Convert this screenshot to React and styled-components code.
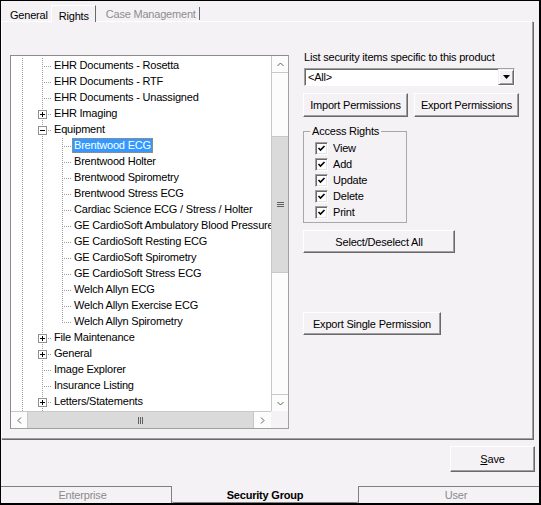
import React from 'react';
import styled, { createGlobalStyle, css } from 'styled-components';

const bg = '#f5f2f5';
const dots = '#a0a0a0';

const GlobalStyle = createGlobalStyle`
  html, body {
    margin: 0;
    padding: 0;
    background: ${bg};
  }
  * {
    box-sizing: border-box;
  }
`;

const Window = styled.div`
  width: 541px;
  height: 505px;
  display: flex;
  flex-direction: column;
  overflow: hidden;
  background: ${bg};
  border: 1px solid #000;
  border-right-width: 2px;
  border-bottom-width: 2px;
  font-family: 'Liberation Sans', Arial, sans-serif;
  font-size: 11px;
  letter-spacing: -0.2px;
  color: #000;
`;

/* ---------- top tabs ---------- */

const TopTabs = styled.div`
  height: 20px;
  flex: none;
  display: flex;
  align-items: flex-end;
  padding-left: 7px;
`;

const TopTab = styled.div`
  height: 14px;
  line-height: 14px;
  padding: 0 2px;
  margin-bottom: -1px;
  white-space: nowrap;
  color: ${(p) => (p.$disabled ? '#8d8d8d' : '#000')};
  ${(p) =>
    p.$separator &&
    css`
      margin-left: 8px;
      padding-right: 3px;
      border-right: 1px solid #696969;
      height: 13px;
      margin-bottom: 1px;
      line-height: 15px;
    `}
  ${(p) =>
    p.$active &&
    css`
      position: relative;
      z-index: 1;
      height: 17px;
      margin-left: 1px;
      margin-bottom: -1px;
      padding: 3px 6px 0 7px;
      line-height: 14px;
      background: ${bg};
      border-left: 1px solid #fff;
      border-top: 1px solid #fff;
      border-right: 1px solid #696969;
    `}
`;

/* ---------- panel ---------- */

const Panel = styled.div`
  width: 532px;
  height: 418px;
  flex: none;
  display: flex;
  align-items: flex-start;
  padding: 29px 0 0 8px;
  border-top: 1px solid #fff;
  border-left: 1px solid #fff;
  border-right: 1px solid #a0a0a0;
  border-bottom: 1px solid #a0a0a0;
  box-shadow: 1px 1px 0 #696969;
`;

/* ---------- tree ---------- */

const Tree = styled.div`
  margin-top: 4px;
  width: 279px;
  height: 374px;
  flex: none;
  display: grid;
  grid-template-columns: 260px 17px;
  grid-template-rows: 355px 17px;
  background: #fff;
  border: 1px solid #a0a0a0;
  border-top-color: #8c8c8c;
  border-left-color: #8c8c8c;
`;

const Viewport = styled.div`
  overflow: hidden;
  padding-top: 2px;
`;

const Row = styled.div`
  display: flex;
  align-items: flex-start;
  height: 16px;
`;

const Guide = styled.span`
  position: relative;
  flex: none;
  width: 20px;
  height: 16px;
  &::before {
    content: '';
    position: absolute;
    left: 11px;
    top: 0;
    width: 1px;
    height: ${(p) => (p.$line === 'half' ? '9px' : '16px')};
    background: linear-gradient(to bottom, ${dots} 50%, transparent 50%) 0 0 / 1px 2px repeat-y;
  }
  ${(p) =>
    p.$branch &&
    css`
      &::after {
        content: '';
        position: absolute;
        left: 12px;
        top: 8px;
        width: 9px;
        height: 1px;
        background: linear-gradient(to right, transparent 50%, ${dots} 50%) 0 0 / 2px 1px repeat-x;
      }
    `}
`;

const Expander = styled.span`
  position: absolute;
  z-index: 1;
  left: 7px;
  top: 4px;
  width: 9px;
  height: 9px;
  border: 1px solid #919191;
  background: #fff;
  display: flex;
  svg {
    display: block;
  }
`;

const Label = styled.span`
  margin-left: 1px;
  padding: 0 2px;
  height: 15px;
  line-height: 15px;
  white-space: nowrap;
  ${(p) =>
    p.$selected &&
    css`
      background: #3399ff;
      color: #fff;
      outline: 1px dotted #d9822b;
      outline-offset: -1px;
    `}
`;

const ToggleSign = ({ open }) => (
  <svg width="7" height="7" viewBox="0 0 7 7">
    <rect x="1" y="3" width="5" height="1" fill="#000" />
    {!open && <rect x="3" y="1" width="1" height="5" fill="#000" />}
  </svg>
);

const TreeRow = ({ level, text, toggle, selected, last }) => (
  <Row>
    {Array.from({ length: level }).map((_, i) => (
      <Guide key={i} $line="full" />
    ))}
    <Guide $line={last ? 'half' : 'full'} $branch>
      {toggle && (
        <Expander>
          <ToggleSign open={toggle === 'minus'} />
        </Expander>
      )}
    </Guide>
    <Label $selected={selected}>{text}</Label>
  </Row>
);

/* ---------- scrollbars ---------- */

const scrollLine = '#c8c8c8';
const thumbColor = '#dadada';

const VScroll = styled.div`
  display: flex;
  flex-direction: column;
  background: #fcfcfc;
  border-left: 1px solid ${scrollLine};
`;

const ScrollArrow = styled.div`
  flex: none;
  width: ${(p) => (p.$horizontal ? '17px' : 'auto')};
  height: ${(p) => (p.$horizontal ? 'auto' : '17px')};
  display: flex;
  align-items: center;
  justify-content: center;
  ${(p) => p.$edge && `border-${p.$edge}: 1px solid ${scrollLine};`}
`;

const VThumb = styled.div`
  flex: none;
  margin-top: ${(p) => p.$offset}px;
  height: ${(p) => p.$size}px;
  background: ${thumbColor};
  border-top: 1px solid ${scrollLine};
  border-bottom: 1px solid ${scrollLine};
  display: flex;
  align-items: center;
  justify-content: center;
`;

const Track = styled.div`
  flex: 1;
`;

const HScroll = styled.div`
  display: flex;
  background: #fcfcfc;
  border-top: 1px solid ${scrollLine};
`;

const HThumb = styled.div`
  flex: none;
  width: ${(p) => p.$size}px;
  background: ${thumbColor};
  border-right: 1px solid ${scrollLine};
  display: flex;
  align-items: center;
  justify-content: center;
`;

const Corner = styled.div`
  background: ${bg};
`;

const Chevron = ({ dir }) => {
  const pts = {
    up: '0.5,4 3.5,1 6.5,4',
    down: '0.5,1 3.5,4 6.5,1',
    left: '4,0.5 1,3.5 4,6.5',
    right: '1,0.5 4,3.5 1,6.5',
  }[dir];
  const vertical = dir === 'up' || dir === 'down';
  return (
    <svg width={vertical ? 7 : 5} height={vertical ? 5 : 7}>
      <polyline points={pts} fill="none" stroke="#606060" strokeWidth="1" />
    </svg>
  );
};

const Grip = ({ horizontal }) =>
  horizontal ? (
    <svg width="5" height="7">
      <rect x="0" y="0" width="1" height="7" fill="#606060" />
      <rect x="2" y="0" width="1" height="7" fill="#606060" />
      <rect x="4" y="0" width="1" height="7" fill="#606060" />
    </svg>
  ) : (
    <svg width="7" height="5">
      <rect x="0" y="0" width="7" height="1" fill="#606060" />
      <rect x="0" y="2" width="7" height="1" fill="#606060" />
      <rect x="0" y="4" width="7" height="1" fill="#606060" />
    </svg>
  );

/* ---------- right column ---------- */

const RightCol = styled.div`
  margin-left: 14px;
  display: flex;
  flex-direction: column;
  align-items: flex-start;
`;

const FieldLabel = styled.div`
  line-height: 13px;
  padding-left: 1px;
  white-space: nowrap;
`;

const Combo = styled.div`
  margin: 4px 0 0 1px;
  width: 211px;
  height: 18px;
  display: flex;
  background: #fff;
  border: 1px solid;
  border-color: #a0a0a0 #fff #fff #a0a0a0;
  box-shadow: inset 1px 1px 0 #696969;
`;

const ComboText = styled.div`
  flex: 1;
  padding: 1px 0 0 3px;
  line-height: 14px;
`;

const DropButton = styled.div`
  width: 16px;
  height: 16px;
  flex: none;
  display: flex;
  align-items: center;
  justify-content: center;
  background: ${bg};
  border: 1px solid;
  border-color: #f0f0f0 #696969 #696969 #f0f0f0;
  box-shadow: inset 1px 1px 0 #fff, inset -1px -1px 0 #a0a0a0;
`;

const ButtonRow = styled.div`
  margin-top: 7px;
  display: flex;
  gap: 6px;
`;

const Button = styled.div`
  width: ${(p) => p.$width}px;
  height: ${(p) => p.$height || 24}px;
  margin-top: ${(p) => p.$top || 0}px;
  display: flex;
  align-items: center;
  justify-content: center;
  white-space: nowrap;
  background: ${bg};
  border: 1px solid;
  border-color: #fff #696969 #696969 #fff;
  box-shadow: inset -1px -1px 0 #a0a0a0;
  u {
    text-decoration: underline;
  }
`;

const Group = styled.fieldset`
  margin: 8px 0 0 0;
  padding: 0;
  width: 104px;
  border: 1px solid #a8a8a8;
  legend {
    margin-left: 6px;
    padding: 0 2px;
    line-height: 13px;
    font-size: 11px;
  }
`;

const GroupBody = styled.div`
  padding: 2px 0 2px 11px;
`;

const CheckRow = styled.div`
  height: 16px;
  display: flex;
  align-items: center;
`;

const CheckBox = styled.span`
  width: 13px;
  height: 13px;
  flex: none;
  display: flex;
  align-items: center;
  justify-content: center;
  background: #fff;
  border: 1px solid;
  border-color: #a0a0a0 #fff #fff #a0a0a0;
  box-shadow: inset 1px 1px 0 #696969, inset -1px -1px 0 #e3e3e3;
`;

const CheckText = styled.span`
  margin-left: 5px;
`;

const Check = ({ label }) => (
  <CheckRow>
    <CheckBox>
      <svg width="9" height="9" viewBox="0 0 9 9">
        <polyline points="1.5,4 3.5,6 7.5,2" fill="none" stroke="#000" strokeWidth="1.6" />
      </svg>
    </CheckBox>
    <CheckText>{label}</CheckText>
  </CheckRow>
);

/* ---------- footer and bottom tabs ---------- */

const Footer = styled.div`
  flex: 1;
  display: flex;
  justify-content: flex-end;
  align-items: flex-start;
  padding: 7px 4px 0 0;
`;

const BottomTabs = styled.div`
  height: 17px;
  flex: none;
  display: flex;
`;

const BottomTab = styled.div`
  width: ${(p) => (p.$width ? `${p.$width}px` : 'auto')};
  flex: ${(p) => (p.$width ? 'none' : '1')};
  text-align: center;
  line-height: 15px;
  white-space: nowrap;
  color: #8a8a8a;
  border-top: 1px solid #808080;
  padding: 1px ${(p) => p.$padRight || 0}px 0 ${(p) => p.$padLeft || 0}px;
  ${(p) => p.$side && `border-${p.$side}: 1px solid #808080;`}
  ${(p) =>
    p.$active &&
    css`
      color: #000;
      font-weight: bold;
      border-top: none;
      border-bottom: 1px solid #808080;
      border-radius: 0 0 2px 2px;
      padding-top: 2px;
    `}
`;

const items = [
  { level: 1, text: 'EHR Documents - Rosetta' },
  { level: 1, text: 'EHR Documents - RTF' },
  { level: 1, text: 'EHR Documents - Unassigned' },
  { level: 1, text: 'EHR Imaging', toggle: 'plus' },
  { level: 1, text: 'Equipment', toggle: 'minus' },
  { level: 2, text: 'Brentwood ECG', selected: true },
  { level: 2, text: 'Brentwood Holter' },
  { level: 2, text: 'Brentwood Spirometry' },
  { level: 2, text: 'Brentwood Stress ECG' },
  { level: 2, text: 'Cardiac Science ECG / Stress / Holter' },
  { level: 2, text: 'GE CardioSoft Ambulatory Blood Pressure' },
  { level: 2, text: 'GE CardioSoft Resting ECG' },
  { level: 2, text: 'GE CardioSoft Spirometry' },
  { level: 2, text: 'GE CardioSoft Stress ECG' },
  { level: 2, text: 'Welch Allyn ECG' },
  { level: 2, text: 'Welch Allyn Exercise ECG' },
  { level: 2, text: 'Welch Allyn Spirometry', last: true },
  { level: 1, text: 'File Maintenance', toggle: 'plus' },
  { level: 1, text: 'General', toggle: 'plus' },
  { level: 1, text: 'Image Explorer' },
  { level: 1, text: 'Insurance Listing' },
  { level: 1, text: 'Letters/Statements', toggle: 'plus' },
  { level: 1, text: '' },
];

const rights = ['View', 'Add', 'Update', 'Delete', 'Print'];

export default function App() {
  return (
    <>
      <GlobalStyle />
      <Window>
        <TopTabs>
          <TopTab>General</TopTab>
          <TopTab $active>Rights</TopTab>
          <TopTab $disabled $separator>
            Case Management
          </TopTab>
        </TopTabs>

        <Panel>
          <Tree>
            <Viewport>
              {items.map((it, i) => (
                <TreeRow key={i} {...it} />
              ))}
            </Viewport>
            <VScroll>
              <ScrollArrow $edge="bottom">
                <Chevron dir="up" />
              </ScrollArrow>
              <VThumb $offset={63} $size={137}>
                <Grip />
              </VThumb>
              <Track />
              <ScrollArrow $edge="top">
                <Chevron dir="down" />
              </ScrollArrow>
            </VScroll>
            <HScroll>
              <ScrollArrow $horizontal $edge="right">
                <Chevron dir="left" />
              </ScrollArrow>
              <HThumb $size={226}>
                <Grip horizontal />
              </HThumb>
              <Track />
              <ScrollArrow $horizontal>
                <Chevron dir="right" />
              </ScrollArrow>
            </HScroll>
            <Corner />
          </Tree>

          <RightCol>
            <FieldLabel>List security items specific to this product</FieldLabel>
            <Combo>
              <ComboText>&lt;All&gt;</ComboText>
              <DropButton>
                <svg width="7" height="4" viewBox="0 0 7 4">
                  <polygon points="0,0 7,0 3.5,4" fill="#000" />
                </svg>
              </DropButton>
            </Combo>
            <ButtonRow>
              <Button $width={105}>Import Permissions</Button>
              <Button $width={105}>Export Permissions</Button>
            </ButtonRow>
            <Group>
              <legend>Access Rights</legend>
              <GroupBody>
                {rights.map((r) => (
                  <Check key={r} label={r} />
                ))}
              </GroupBody>
            </Group>
            <Button $width={152} $height={23} $top={7}>
              Select/Deselect All
            </Button>
            <Button $width={138} $height={23} $top={59}>
              Export Single Permission
            </Button>
          </RightCol>
        </Panel>

        <Footer>
          <Button $width={85} $height={26}>
            <span>
              <u>S</u>ave
            </span>
          </Button>
        </Footer>

        <BottomTabs>
          <BottomTab $width={171} $side="right" $padRight={7}>
            Enterprise
          </BottomTab>
          <BottomTab $width={186} $active>
            Security Group
          </BottomTab>
          <BottomTab $side="left" $padLeft={14}>
            User
          </BottomTab>
        </BottomTabs>
      </Window>
    </>
  );
}
